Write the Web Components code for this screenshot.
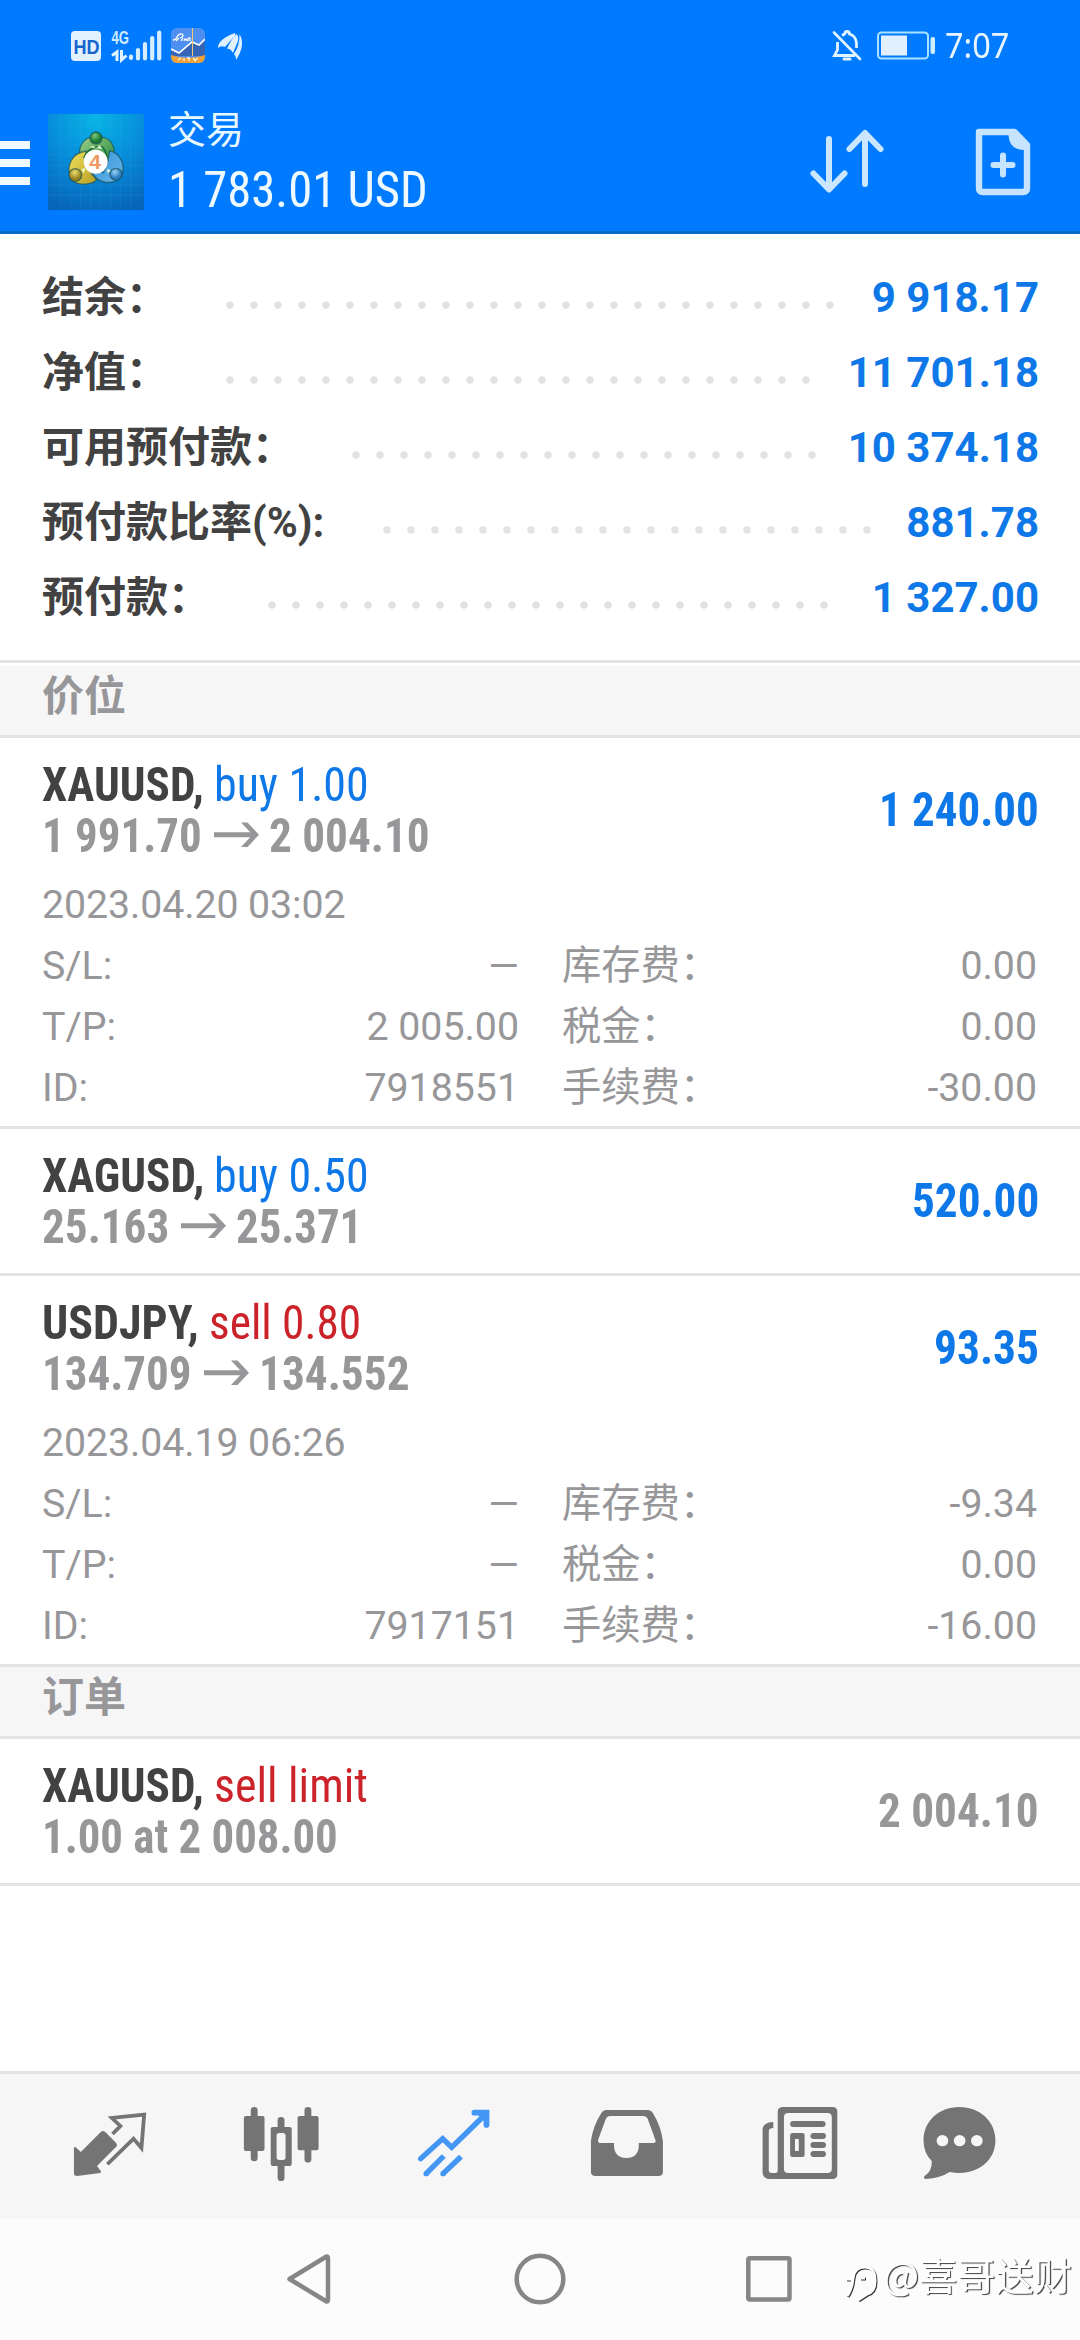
<!DOCTYPE html>
<html lang="zh-CN">
<head>
<meta charset="utf-8">
<title>交易</title>
<style>
  body { margin: 0; width: 1080px; background: #fff; font-family: "Roboto Condensed", Roboto, "Noto Sans CJK SC", sans-serif; }
</style>
</head>
<body>
<trade-app></trade-app>
<script>
const define = (name, html, init) => {
  const tpl = document.createElement('template');
  tpl.innerHTML = html;
  customElements.define(name, class extends HTMLElement {
    connectedCallback() {
      if (this.shadowRoot) return;
      const root = this.attachShadow({ mode: 'open' });
      root.append(tpl.content.cloneNode(true));
      if (init) init.call(this, root);
    }
  });
};

/* Condensed text that occupies an exact width */
define('fit-text', `
<style>
  :host { display: block; flex: none; font-family: "Roboto Condensed", Roboto, "Noto Sans CJK SC", sans-serif; font-stretch: 75%; }
  span { display: block; width: max-content; white-space: pre; transform-origin: 0 50%; }
</style><span><slot></slot></span>`, function (root) {
  const w = +this.getAttribute('w');
  this.style.width = w + 'px';
  const span = root.querySelector('span');
  span.style.transform = `scaleX(${w / span.offsetWidth})`;
});

define('status-bar', `
<style>
  :host { display: flex; flex: none; align-items: center; justify-content: space-between; height: 90px; padding: 0 71px 0 68px; color: #eaf6ff; }
  svg { display: block; }
  .right { display: flex; align-items: center; gap: 7px; font: 34px/38px "Noto Sans", sans-serif; }
  .left { font-family: "Liberation Sans", sans-serif; font-weight: bold; }
</style>
<svg class="left" width="178" height="38" viewBox="68 26 178 38">
  <rect x="71" y="31" width="30" height="30" rx="4" fill="#e2f1ff"/>
  <text x="73.5" y="53.5" font-size="20" textLength="26" lengthAdjust="spacingAndGlyphs" fill="#1565cf">HD</text>
  <text x="111.5" y="43.5" font-size="18.5" textLength="17.5" lengthAdjust="spacingAndGlyphs" fill="#cfeaff">4G</text>
  <g fill="none" stroke="#e2f4ff" stroke-width="3"><path d="M112 55.5 L117 52 V61"/><path d="M121.5 50 V60 L126.5 55.5"/></g>
  <g stroke="#d5eeff" stroke-width="4.2" stroke-linecap="round"><path d="M131 56.5V58M138 50V58.5M145 44V58.5M152.2 38V58.5M159.2 32.5V58.5"/></g>
  <clipPath id="c"><rect x="171" y="28" width="34" height="35" rx="6"/></clipPath>
  <g clip-path="url(#c)">
    <rect x="171" y="28" width="34" height="35" fill="#4f8ff0"/>
    <path d="M171 50L179 53L193 42L199 45L205 40V56H171Z" fill="#3565b4"/>
    <path d="M171 55Q188 61 205 55V64H171Z" fill="#f2a23a"/>
    <path d="M171 49L179 53L192 42L199 45L205 39" fill="none" stroke="#fff" stroke-width="1.6"/>
    <path d="M192.5 28V56" stroke="#f6c77e" stroke-width="1"/>
    <path d="M173 40Q176 40 177 37Q179 33 182 34Q185 36 180 38M176 41L179 38M181 41L183 38M184 41Q185 37 187 41M188 41Q187 37 190 38V41" fill="none" stroke="#fff" stroke-width="1.3"/>
    <path d="M178 60L181 58M184 58V61M187 58H190M189 58V61M193 58L196 61M198 58L194 61" stroke="#fff2cf" stroke-width="1.3"/>
  </g>
  <g fill="#dff1ff"><path d="M218 48Q218 39 235 33Q236 36 233 38Q229 42 225 47Q221 45 218 48Z"/><path d="M227 49Q230 41 236.500 34Q239 36 238 41Q235 48 233 53Q230 48 227 49Z"/><path d="M239.5 34Q246 45 236 60Q236 56 234 54Q240 45 239.5 34Z"/></g>
</svg>
<div class="right">
  <svg width="106" height="38" viewBox="832 26 106 38" fill="none" stroke="#e2f4ff">
    <path d="M837.5 42V50L834.5 55.5H855M842 35.5Q844 34.5 845 33.5Q845 31.5 847 31.5Q849.5 31.5 849.5 34Q856 36 856.5 43V48" stroke-width="2.8"/>
    <path d="M834 32.5L860 59" stroke-width="2.6" stroke-linecap="round"/><path d="M844 59H850" stroke-width="3" stroke-linecap="round"/>
    <rect x="878" y="32.5" width="50" height="26" rx="3.5" stroke="#a9e2ff" stroke-width="2"/>
    <rect x="881" y="35.5" width="26" height="20" fill="#e2efff" stroke="none"/>
    <rect x="930.5" y="37" width="4.5" height="17" rx="2" fill="#cdeeff" stroke="none"/>
  </svg>
  <fit-text w="64" style="font-family:'Noto Sans';font-stretch:100%">7:07</fit-text>
</div>`);

define('app-logo', `
<style>:host { display: block; width: 96px; height: 96px; flex: none } svg { display: block; font-family: "Liberation Sans", sans-serif; font-weight: bold; }</style>
<svg width="96" height="96" viewBox="12 12 288 288">
  <defs>
    <radialGradient id="bg" cx=".5" cy=".05" r="1"><stop offset="0" stop-color="#08b4e4"/><stop offset=".45" stop-color="#0690dc"/><stop offset="1" stop-color="#0764b8"/></radialGradient>
    <linearGradient id="g" x1="0" y1="0" x2="1" y2="1"><stop offset="0" stop-color="#9ed08a"/><stop offset="1" stop-color="#1c8434"/></linearGradient>
    <linearGradient id="y" x1="0" y1="0" x2="1" y2="1"><stop offset="0" stop-color="#f0e25e"/><stop offset="1" stop-color="#b89d22"/></linearGradient>
    <linearGradient id="b" x1="0" y1="0" x2="1" y2="1"><stop offset="0" stop-color="#2f8fd6"/><stop offset="1" stop-color="#6bb9ea"/></linearGradient>
    <radialGradient id="gh" cx=".4" cy=".3"><stop offset="0" stop-color="#7cc878"/><stop offset="1" stop-color="#1d7a30"/></radialGradient>
    <radialGradient id="yh" cx=".45" cy=".3"><stop offset="0" stop-color="#ecdc70"/><stop offset="1" stop-color="#9a8420"/></radialGradient>
    <radialGradient id="bh" cx=".4" cy=".3"><stop offset="0" stop-color="#9bd2f4"/><stop offset="1" stop-color="#2a7cc4"/></radialGradient>
  </defs>
  <rect x="12" y="12" width="288" height="288" fill="url(#bg)"/>
  <path d="M50 12V300M80 12V300M110 12V300M140 12V300M170 12V300M200 12V300M230 12V300M260 12V300M12 45H300M12 75H300M12 105H300M12 135H300M12 165H300M12 195H300M12 225H300M12 255H300" stroke="#5cc8f0" stroke-opacity=".16" stroke-width="2"/>
  <g stroke="#174d54" stroke-opacity=".65" stroke-width="4">
    <path d="M156 80C112 80 100 118 111 148L135 150L178 180C207 162 222 127 201 96C190 82 174 80 156 80Z" fill="url(#g)"/>
    <path d="M127 123C82 129 64 169 82 209C106 231 146 222 158 210L133 178L121 156Z" fill="url(#y)"/>
    <path d="M197 122C230 130 246 165 232 199C205 229 160 221 142 185L178 188L190 160Z" fill="url(#b)"/>
    <circle cx="156" cy="84" r="18" fill="url(#gh)"/><circle cx="94" cy="195" r="19" fill="url(#yh)"/><circle cx="216" cy="193" r="18" fill="url(#bh)"/>
  </g>
  <path d="M119 145Q135 105 175 111Q190 126 188 148" fill="none" stroke="#176f38" stroke-width="5"/>
  <path d="M135 112L148 108L157 116L166 106L176 116M112 178L124 174L120 190M190 176L200 182L190 190" fill="#eefad8"/>
  <circle cx="155" cy="155" r="36" fill="#fff"/>
  <text x="136" y="178" font-size="63" fill="#ed9860">4</text>
</svg>`);

define('app-header', `
<style>
  :host { display: flex; flex: none; flex-direction: column; height: 231px; background: #007aff; border-bottom: 3px solid #0a6ac8; color: #fff; }
  .bar { display: flex; align-items: flex-start; padding-right: 47px; }
  svg { display: block; flex: none; }
  .burger { width: 30px; margin: 51px 18px 0 0; display: flex; flex-direction: column; gap: 10px; }
  .burger i { height: 8px; background: #f0f9ff; }
  app-logo { margin-top: 24px; }
  .t { flex: 1; margin: 10px 0 0 24px; color: #eefaff; }
  .t1 { font: 38px/60px Roboto, "Noto Sans CJK SC", sans-serif; height: 61px; color: #e8f8ff; }
  .t2 { font-size: 50px; line-height: 58px; }
  .sort { margin: 38px 86px 0 0; } .doc { margin-top: 35px; }
</style>
<status-bar></status-bar>
<div class="bar">
  <div class="burger"><i></i><i></i><i></i></div>
  <app-logo></app-logo>
  <div class="t"><div class="t1">交易</div><fit-text class="t2" w="260">1 783.01 USD</fit-text></div>
  <svg class="sort" width="80" height="70" viewBox="806 128 80 70" fill="none" stroke="#cbe6ff" stroke-width="6" stroke-linecap="round" stroke-linejoin="round"><path d="M828 139V189M812.5 173.5L828 189.5L843.5 173.5M864 184V134M848.5 149L864 133L879.5 149"/></svg>
  <svg class="doc" width="60" height="74" viewBox="972 125 60 74"><path d="M978.500 132H1013.500L1026 145V188Q1026 192 1022 192H982Q978 192 978 188V132Z" fill="none" stroke="#c6e3ff" stroke-width="6.400" stroke-linejoin="round"/><path d="M1007.500 131V135Q1008 150 1023 150H1027V144L1014 131Z" fill="#c6e3ff"/><path d="M1002 155.500V174.500M992.500 165H1011.500" stroke="#c6e3ff" stroke-width="6" stroke-linecap="round"/></svg>
</div>`);

define('summary-row', `
<style>
  :host { display: flex; height: 75px; line-height: 75px; font-size: 42px; font-weight: 700; padding: 0 41px 0 42px; font-family: Roboto, "Noto Sans CJK SC", sans-serif; color: #424242; }
  .l { flex: none; white-space: nowrap; }
  .d { flex: none; height: 8px; margin: 41px 0 0 1px; background: radial-gradient(circle at 12px 4px, #e2e2e2 3.3px, transparent 4.3px) 0 0 / 24px 8px; }
  .v { margin-left: auto; color: #0f78e8; }
</style><div class="l"><slot></slot></div><div class="d"></div><div class="v"></div>`, function (root) {
  root.querySelector('.l').style.width = this.getAttribute('lead') + 'px';
  root.querySelector('.d').style.width = this.getAttribute('dots') * 24 + 'px';
  root.querySelector('.v').textContent = this.getAttribute('value');
});

define('section-title', `
<style>:host { display: block; height: 69px; background: #f6f6f7; border-bottom: 3px solid #e4e4e4; padding-left: 42px; font: 700 42px/62px Roboto, "Noto Sans CJK SC", sans-serif; color: #97979a; }</style><slot></slot>`);

define('arrow-right', `
<style>:host { display: block; flex: none; margin: 0 10px 0 12px; } svg { display: block; }</style>
<svg width="45" height="51" viewBox="0 0 45 51"><path d="M27 12.500H33.500L45 24.700L33.500 36.900H27L38.500 24.700Z" fill="#97979a"/><path d="M0 24.700H41" stroke="#97979a" stroke-width="5"/></svg>`);

define('trade-item', `
<style>
  :host { display: block; border-bottom: 3px solid #e4e4e4; background: #fff; }
  .head { display: flex; align-items: center; justify-content: space-between; height: 144px; padding: 0 41px 0 42px; font-size: 48px; line-height: 51px; }
  .line { display: flex; }
  ::slotted([slot=value]) { font-weight: 700; margin-bottom: 2px; }
  .a ::slotted(:first-child) { font-weight: 700; color: #424242; }
  .b { font-weight: 700; color: #97979a; }
</style>
<div class="head"><div><div class="line a"><slot name="title"></slot></div><div class="line b"><slot name="price"></slot></div></div><slot name="value"></slot></div>
<slot></slot>`);

define('trade-details', `
<style>
  :host { display: grid; grid-template-columns: 477px 475px; column-gap: 43px; grid-template-rows: 61px 61px 61px 60px; padding: 0 41px 8px 42px; margin-top: -7px; font: 39.3px/61px Roboto, "Noto Sans CJK SC", sans-serif; color: #97979a; }
  .date { grid-column: 1 / 3; letter-spacing: -.1px; }
  .r { display: flex; justify-content: space-between; white-space: pre; }
</style><div class="date"></div>`, function (root) {
  root.querySelector('.date').textContent = this.getAttribute('date');
  const v = this.getAttribute('values').split('|');
  ['S/L:', '库存费：', 'T/P:', '税金：', 'ID:', '手续费：'].forEach((k, i) => {
    const r = document.createElement('div'); r.className = 'r';
    for (const t of [k, v[i]]) { const s = document.createElement('span'); s.textContent = t; r.append(s); }
    root.append(r);
  });
});

define('tab-bar', `
<style>
  :host { display: flex; height: 144px; padding-left: 24px; border-top: 3px solid #e4e4e4; background: #f6f6f6; }
  svg { display: block; flex: none; }
</style>
<svg width="172.200" height="144" viewBox="70 42 500 432" preserveAspectRatio="none" fill="#747474"><path d="M215 262V341Q216 348 224 348L291 339Q295 337 293 333L282 318L340 258Q341 253 337 248L306 216Q299 210 293 216L235 276L220 262Z"/><path d="M327 222L350 198L325 174L419 164L411 264L388 236L312 313" fill="none" stroke="#747474" stroke-width="11"/></svg>
<svg width="172.200" height="144" viewBox="570 42 500 432" preserveAspectRatio="none" fill="#747474"><rect x="709" y="168" width="60" height="105" rx="6"/><rect x="865" y="168" width="61" height="103" rx="6"/><path d="M739 151V294M895 151V298M817 181V210M817 312V353" stroke="#747474" stroke-width="20" stroke-linecap="round"/><path d="M793 201H842Q848 201 848 207V312Q848 318 842 318H793Q787 318 787 312V207Q787 201 793 201Z"/><rect x="804" y="219" width="26" height="81" rx="8" fill="#f6f6f6"/></svg>
<svg width="172.900" height="144" viewBox="1068 42 502 432" preserveAspectRatio="none" fill="none" stroke="#4396f4" stroke-width="16"><path d="M1221 296L1285 236L1311 262L1410 162" stroke-linecap="round"/><path d="M1237 341L1288 288M1286 341L1338 290"/><path d="M1237 341V341.100M1286 341V341.100" stroke-linecap="round"/><path d="M1377 158H1412V195" stroke-width="17" stroke-linecap="round"/><path d="M1382 160H1410V188" fill="#4396f4" stroke="none"/></svg>
<svg width="172.200" height="144" viewBox="2 42 500 432" preserveAspectRatio="none" fill="#747474"><path fill-rule="evenodd" d="M192 150H312Q322 150 328 161Q350 198 356 243V335Q356 348 342 348H161Q147 348 147 335V243Q153 198 176 161Q182 150 192 150ZM203 168Q194 168 190 177L168 239Q166 249 176 249H214V259Q216 294 250 294Q284 294 286 259V249H328Q338 248 334 239L312 177Q308 168 299 168Z"/></svg>
<svg width="172.200" height="144" viewBox="502 42 500 432" preserveAspectRatio="none" fill="none" stroke="#747474" stroke-width="18"><path fill="#747474" stroke="none" fill-rule="evenodd" d="M706 141H849Q863 141 863 155V343Q863 357 849 357H668Q646 357 646 335V210Q646 187 677 186V204Q664 204 664 213V331Q664 339 673 339H683Q690 339 690 331V155Q690 141 706 141ZM721 159Q708 159 708 172V326Q708 339 721 339H834Q847 339 847 326V172Q847 159 834 159Z"/><path d="M735 192H820M794 228H821M794 255H821M794 282H821" stroke-linecap="round"/><path fill="#747474" stroke="none" fill-rule="evenodd" d="M733 219H762Q768 219 768 226V284Q768 291 762 291H733Q726 291 726 284V226Q726 219 733 219ZM740 237V273H751V237Z"/></svg>
<svg width="180" height="144" viewBox="1000 42 523 432" preserveAspectRatio="none" fill="#747474"><path fill-rule="evenodd" d="M1213 141C1273 141 1318 184 1318 241C1318 300 1270 339 1215 339Q1200 339 1185 336Q1158 354 1116 357Q1106 354 1113 347Q1134 334 1133 303Q1109 280 1109 241C1109 184 1153 141 1213 141ZM1147 242A17 17 0 1 0 1181 242A17 17 0 1 0 1147 242M1197 242A17 17 0 1 0 1231 242A17 17 0 1 0 1197 242M1247 242A17 17 0 1 0 1281 242A17 17 0 1 0 1247 242"/></svg>`);

define('nav-bar', `
<style>
  :host { display: flex; align-items: center; height: 122px; background: #fcfcfc; }
  svg { display: block; flex: none; }
  .mark { display: flex; align-items: center; color: #fff; font: 38px/50px "Noto Sans CJK SC", sans-serif; white-space: nowrap; text-shadow: 1.200px 1.200px .8px #444; margin-left: 39px; }
  .mark svg { filter: drop-shadow(1.200px 1.200px .5px #333); margin-top: 3px; }
  .mark fit-text { margin-bottom: 10px; }
</style>
<svg width="798" height="122" viewBox="0 2218 798 122" fill="none" stroke="#868686" stroke-width="4.500" stroke-linejoin="round"><path d="M289.500 2279L326.500 2256.500Q328 2256.500 328 2258.500V2299.500Q328 2301.500 326.500 2301.500Z"/><circle cx="540" cy="2279" r="23.300"/><rect x="748.300" y="2258.300" width="41.200" height="41.200" rx="1.500"/></svg>
<div class="mark"><svg width="46" height="50" viewBox="0 0 46 50" fill="none" stroke="#fff" stroke-width="3"><path d="M10 40Q15 33 16 22Q17 11 28 11Q38 11 38 25Q38 36 30 38L21 44M9 23H16M23 22H28" /></svg><fit-text w="189" style="font-family:'Noto Sans CJK SC';font-stretch:100%">@喜哥送财</fit-text></div>`);

define('trade-app', `
<style>
  :host { display: flex; flex-direction: column; width: 1080px; height: 2340px; overflow: hidden; background: #fff; }
  .sum { padding: 26px 0 25px; border-bottom: 3px solid #e4e4e4; margin-bottom: 3px; }
  main { flex: 1; }
  .buy { color: #0f78e8; margin-left: 10px; } .sell { color: #cc2229; margin-left: 10px; }
  .val { color: #0f78e8; } .gray { color: #97979a; }
</style>
<app-header></app-header>
<main>
  <div class="sum">
    <summary-row lead="175" dots="26" value="9 918.17">结余：</summary-row>
    <summary-row lead="175" dots="25" value="11 701.18">净值：</summary-row>
    <summary-row lead="301" dots="20" value="10 374.18">可用预付款：</summary-row>
    <summary-row lead="332" dots="21" value="881.78">预付款比率(%):</summary-row>
    <summary-row lead="217" dots="24" value="1 327.00">预付款：</summary-row>
  </div>
  <section-title>价位</section-title>
  <trade-item>
    <fit-text slot="title" w="162">XAUUSD,</fit-text><fit-text slot="title" class="buy" w="155">buy 1.00</fit-text>
    <fit-text slot="price" w="160">1 991.70</fit-text><arrow-right slot="price"></arrow-right><fit-text slot="price" w="161">2 004.10</fit-text>
    <fit-text slot="value" class="val" w="160">1 240.00</fit-text>
    <trade-details date="2023.04.20 03:02" values="—|0.00|2 005.00|0.00|7918551|-30.00"></trade-details>
  </trade-item>
  <trade-item>
    <fit-text slot="title" w="162">XAGUSD,</fit-text><fit-text slot="title" class="buy" w="155">buy 0.50</fit-text>
    <fit-text slot="price" w="127">25.163</fit-text><arrow-right slot="price"></arrow-right><fit-text slot="price" w="126">25.371</fit-text>
    <fit-text slot="value" class="val" w="127">520.00</fit-text>
  </trade-item>
  <trade-item>
    <fit-text slot="title" w="157">USDJPY,</fit-text><fit-text slot="title" class="sell" w="152">sell 0.80</fit-text>
    <fit-text slot="price" w="150">134.709</fit-text><arrow-right slot="price"></arrow-right><fit-text slot="price" w="151">134.552</fit-text>
    <fit-text slot="value" class="val" w="105">93.35</fit-text>
    <trade-details date="2023.04.19 06:26" values="—|-9.34|—|0.00|7917151|-16.00"></trade-details>
  </trade-item>
  <section-title>订单</section-title>
  <trade-item>
    <fit-text slot="title" w="162">XAUUSD,</fit-text><fit-text slot="title" class="sell" w="154">sell limit</fit-text>
    <fit-text slot="price" w="296">1.00 at 2 008.00</fit-text>
    <fit-text slot="value" class="gray" w="161">2 004.10</fit-text>
  </trade-item>
</main>
<tab-bar></tab-bar>
<nav-bar></nav-bar>`);
</script>
</body>
</html>
